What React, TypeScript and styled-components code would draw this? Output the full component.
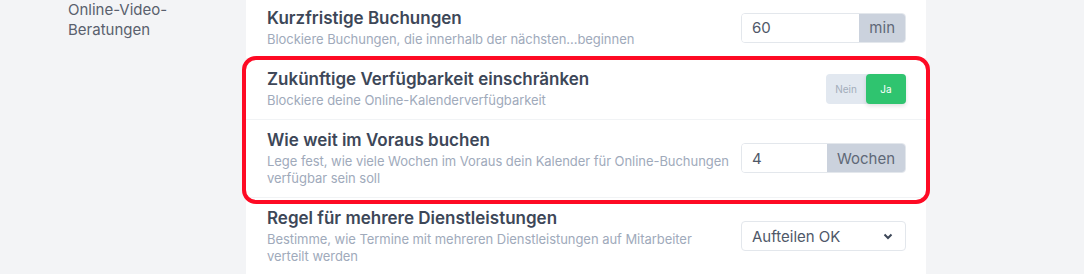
import React from "react";
import styled, { createGlobalStyle } from "styled-components";

const GlobalStyle = createGlobalStyle`
  html, body {
    margin: 0;
    padding: 0;
    background: #f3f4f6;
    font-family: Inter, "Noto Sans", sans-serif;
  }
`;

const Page = styled.div`
  display: grid;
  grid-template-columns: 246px 680px;
  min-height: 274px;
  overflow: hidden;
`;

const SideNav = styled.nav`
  padding: 0 0 0 68px;
  font-size: 15px;
  line-height: 20px;
  color: #59606d;
`;

const Card = styled.section`
  background: #ffffff;
  margin-top: -2px;
`;

const Row = styled.div<{ $divider?: boolean }>`
  display: flex;
  align-items: center;
  justify-content: space-between;
  gap: 8px;
  padding: 9px 20px 10px 21px;
  border-top: ${(p) => (p.$divider ? "1px solid #f1f3f5" : "none")};
`;

const Text = styled.div`
  display: flex;
  flex-direction: column;
  gap: 2px;
  max-width: 465px;
`;

const Title = styled.h3`
  margin: 0;
  font-size: 17px;
  line-height: 22px;
  font-weight: 600;
  color: #3d4758;
`;

const Hint = styled.p`
  margin: 0;
  font-size: 13px;
  line-height: 17px;
  color: #a0aabb;
  letter-spacing: -0.05px;
`;

const Highlight = styled.div`
  position: relative;
  &::after {
    content: "";
    position: absolute;
    top: -2px;
    bottom: -7px;
    left: -4px;
    right: -4px;
    border: 4px solid #fe0a24;
    border-radius: 14px;
    pointer-events: none;
  }
`;

const InputGroup = styled.div`
  display: flex;
  width: 165px;
  height: 30px;
  flex-shrink: 0;
  border: 1px solid #e3e7ec;
  border-radius: 4px;
  overflow: hidden;
  box-sizing: border-box;
`;

const Field = styled.input`
  flex: 1;
  min-width: 0;
  border: none;
  outline: none;
  padding: 0 10px;
  font: inherit;
  font-size: 15px;
  color: #4f5868;
  background: #fff;
`;

const Addon = styled.span`
  display: flex;
  align-items: center;
  padding: 0 10px;
  background: #cbd2dd;
  font-size: 15px;
  color: #5f6877;
`;

const Toggle = styled.div`
  display: flex;
  flex-shrink: 0;
  width: 80px;
  height: 30px;
  border-radius: 4px;
  background: #e2e8f0;
`;

const ToggleOption = styled.button<{ $active?: boolean }>`
  flex: 1;
  border: none;
  border-radius: 4px;
  font: inherit;
  font-size: 10px;
  cursor: pointer;
  background: ${(p) => (p.$active ? "#2fc46f" : "transparent")};
  color: ${(p) => (p.$active ? "#ffffff" : "#a3adbb")};
  box-shadow: ${(p) => (p.$active ? "0 2px 4px rgba(0,0,0,0.12)" : "none")};
`;

const Select = styled.div`
  display: flex;
  align-items: center;
  justify-content: space-between;
  width: 165px;
  height: 30px;
  flex-shrink: 0;
  box-sizing: border-box;
  padding: 0 12px 0 10px;
  border: 1px solid #e3e7ec;
  border-radius: 4px;
  font-size: 15px;
  color: #4f5868;
`;

function Chevron() {
  return (
    <svg width="10" height="7" viewBox="0 0 10 7">
      <path d="M1.5 1.5 L5 5 L8.5 1.5" fill="none" stroke="#3d4758" strokeWidth="2" />
    </svg>
  );
}

export default function App() {
  return (
    <>
      <GlobalStyle />
      <Page>
        <SideNav>
          Online-Video-
          <br />
          Beratungen
        </SideNav>
        <Card>
          <Row>
            <Text>
              <Title>Kurzfristige Buchungen</Title>
              <Hint>Blockiere Buchungen, die innerhalb der nächsten...beginnen</Hint>
            </Text>
            <InputGroup>
              <Field defaultValue="60" />
              <Addon>min</Addon>
            </InputGroup>
          </Row>
          <Highlight>
            <Row $divider>
              <Text>
                <Title>Zukünftige Verfügbarkeit einschränken</Title>
                <Hint>Blockiere deine Online-Kalenderverfügbarkeit</Hint>
              </Text>
              <Toggle>
                <ToggleOption>Nein</ToggleOption>
                <ToggleOption $active>Ja</ToggleOption>
              </Toggle>
            </Row>
            <Row $divider>
              <Text>
                <Title>Wie weit im Voraus buchen</Title>
                <Hint>
                  Lege fest, wie viele Wochen im Voraus dein Kalender für Online-Buchungen verfügbar sein soll
                </Hint>
              </Text>
              <InputGroup>
                <Field defaultValue="4" />
                <Addon>Wochen</Addon>
              </InputGroup>
            </Row>
          </Highlight>
          <Row $divider>
            <Text>
              <Title>Regel für mehrere Dienstleistungen</Title>
              <Hint>Bestimme, wie Termine mit mehreren Dienstleistungen auf Mitarbeiter verteilt werden</Hint>
            </Text>
            <Select>
              Aufteilen OK
              <Chevron />
            </Select>
          </Row>
        </Card>
      </Page>
    </>
  );
}
